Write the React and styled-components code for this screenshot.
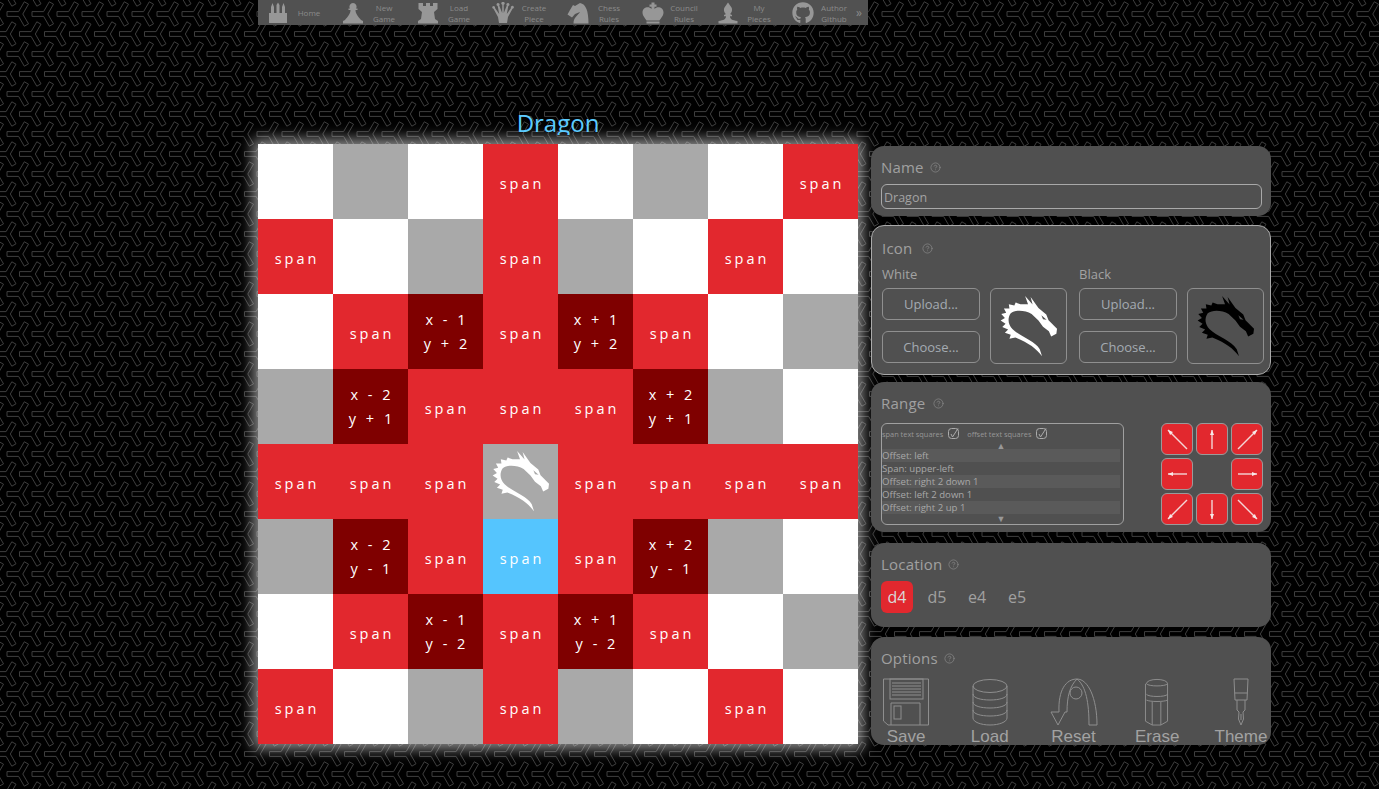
import React from 'react'
import styled, { createGlobalStyle } from 'styled-components'
import { CircleHelp } from 'lucide-react'
import { FaGithub } from 'react-icons/fa'

const yShape = (cx, cy) => {
  const pts = [[-13, -2.4], [-1.4, -2.4], [4.3, -12.2], [8.5, -9.8], [2.8, 0], [8.5, 9.8], [4.3, 12.2], [-1.4, 2.4], [-13, 2.4]]
  return `<polygon points="${pts.map(([x, y]) => `${x + cx},${y + cy}`).join(' ')}"/>`
}

const tile = `<svg xmlns="http://www.w3.org/2000/svg" width="25" height="40"><g fill="none" stroke="#3e3e3e" stroke-width="1">${[
  [20, 14], [-5, 14], [7.5, 34], [32.5, 34], [7.5, -6], [32.5, -6]
].map(([x, y]) => yShape(x, y)).join('')}</g></svg>`

const GlobalStyle = createGlobalStyle`
  html, body {
    margin: 0;
    height: 100%;
    overflow: hidden;
  }
  body {
    background-color: #000;
    background-image: url("data:image/svg+xml,${encodeURIComponent(tile)}");
    font-family: "Open Sans", "Liberation Sans", sans-serif;
    color: #a3a3a3;
  }
`

const Page = styled.div`
  width: 1379px;
  height: 789px;
  padding-left: 258px;
  box-sizing: border-box;
`

const Nav = styled.nav`
  display: flex;
  width: 610px;
  height: 25px;
  background: #515151;
`

const NavItem = styled.div`
  flex: 0 0 75px;
  display: flex;
  align-items: center;
  padding-left: 9px;
  box-sizing: border-box;
  color: #979797;
  svg { flex: 0 0 22px; }
`

const NavLabel = styled.span`
  width: 40px;
  text-align: center;
  font-size: 8px;
  line-height: 11px;
  color: #8b8b8b;
`

const NavLine = styled.span`
  display: block;
`

const More = styled.span`
  font-size: 12px;
  line-height: 25px;
  color: #8b8b8b;
  margin-left: -2px;
`

const Main = styled.div`
  display: flex;
  gap: 13px;
`

const BoardColumn = styled.div`
  width: 600px;
`

const Title = styled.h1`
  margin: 81px 0 9px;
  height: 29px;
  overflow: hidden;
  text-align: center;
  font-weight: 400;
  font-size: 24px;
  line-height: 34px;
  color: #5ccbff;
`

const Board = styled.div`
  display: grid;
  grid-template-columns: repeat(8, 75px);
  grid-auto-rows: 75px;
  box-shadow: 0 0 13px 5px rgba(255, 255, 255, 0.55);
`

const squareColors = {
  w: '#ffffff',
  g: '#a9a9a9',
  r: '#e2282e',
  d: '#7f0000',
  b: '#55c5fe'
}

const Square = styled.div`
  display: flex;
  flex-direction: column;
  align-items: center;
  justify-content: center;
  box-sizing: border-box;
  padding: ${p => (p.$kind === 'r' || p.$kind === 'b' ? 4 : 0)}px 0 0 3px;
  background: ${p => squareColors[p.$kind]};
  color: #fff;
  font-size: 14.5px;
  line-height: 24px;
  letter-spacing: 3px;
  white-space: pre;
  svg { margin-left: -3px; }
`

const Side = styled.div`
  width: 400px;
  padding-top: 121px;
  display: flex;
  flex-direction: column;
`

const Panel = styled.section`
  box-sizing: border-box;
  height: ${p => p.$height}px;
  margin-bottom: ${p => p.$after}px;
  padding: ${p => p.$top}px 10px 0;
  background: #505050;
  border-radius: 13px;
  border: ${p => (p.$outlined ? '1px solid #aaa' : 'none')};
`

const PanelTitle = styled.div`
  display: flex;
  align-items: center;
  gap: ${p => p.$gap}px;
  font-size: 15px;
  line-height: 20px;
  letter-spacing: 0.2px;
  color: #a0a0a0;
  svg { color: #8f8f8f; }
`

const NameInput = styled.input`
  display: block;
  box-sizing: border-box;
  width: 381px;
  height: 25px;
  margin-top: 7px;
  padding: 2px 2px 0;
  background: transparent;
  border: 1px solid #a9a9a9;
  border-radius: 6px;
  font: 12.5px "Open Sans", sans-serif;
  color: #a3a3a3;
`

const IconGroups = styled.div`
  display: flex;
  margin-top: 6px;
`

const IconGroup = styled.div`
  flex: 0 0 197px;
`

const GroupLabel = styled.div`
  font-size: 13px;
  line-height: 20px;
  margin-bottom: 4px;
`

const GroupRow = styled.div`
  display: flex;
  gap: 10px;
`

const ButtonStack = styled.div`
  display: flex;
  flex-direction: column;
  gap: 11px;
`

const OutlineButton = styled.button`
  width: 98px;
  height: 32px;
  padding: 0;
  background: transparent;
  border: 1px solid #8f8f8f;
  border-radius: 6px;
  font: 500 13px "Open Sans", sans-serif;
  color: #a4abb2;
`

const Preview = styled.div`
  box-sizing: border-box;
  width: 77px;
  height: 76px;
  display: flex;
  align-items: center;
  justify-content: center;
  border: 1px solid #8f8f8f;
  border-radius: 6px;
`

const RangeRow = styled.div`
  display: flex;
  justify-content: space-between;
  width: 382px;
  margin-top: 10px;
`

const ListBox = styled.div`
  box-sizing: border-box;
  width: 243px;
  height: 102px;
  padding: 0 3px 0 0;
  border: 1px solid #a0a0a0;
  border-radius: 6px;
`

const ListHead = styled.div`
  display: flex;
  align-items: center;
  height: 19px;
  font-size: 7.4px;
  color: #979797;
  white-space: nowrap;
`

const CheckLabel = styled.span`
  margin-right: ${p => p.$gap}px;
`

const CheckMark = styled.svg`
  width: 11px;
  height: 11px;
  margin-right: ${p => p.$gap}px;
  fill: none;
  stroke: #ababab;
  stroke-width: 1;
`

const Scroll = styled.div`
  height: ${p => p.$height}px;
  text-align: center;
  font-size: 9px;
  line-height: ${p => p.$height}px;
  color: #989898;
`

const ListRow = styled.div`
  height: 13px;
  line-height: 13px;
  font-size: 9.6px;
  white-space: nowrap;
  color: #a8a8a8;
  background: ${p => (p.$odd ? '#5a5a5a' : 'transparent')};
`

const ArrowPad = styled.div`
  display: grid;
  grid-template-columns: repeat(3, 32px);
  grid-auto-rows: 32px;
  gap: 3px;
`

const ArrowButton = styled.div`
  box-sizing: border-box;
  background: #e2282e;
  border: 1px solid #9a9a9a;
  border-radius: 6px;
  svg { display: block; }
`

const Locations = styled.div`
  display: flex;
  gap: 8px;
  margin-top: 7px;
`

const LocationButton = styled.div`
  width: 32px;
  height: 32px;
  line-height: 32px;
  text-align: center;
  border-radius: 6px;
  font-size: 16px;
  color: ${p => (p.$active ? '#d9d9d9' : '#a0a0a0')};
  background: ${p => (p.$active ? '#e2282e' : 'transparent')};
`

const OptionRow = styled.div`
  display: flex;
  gap: 13.75px;
  margin: 10px -10px 0;
`

const Option = styled.div`
  flex: 0 0 70px;
  display: flex;
  flex-direction: column;
  align-items: center;
  font-family: "Liberation Sans", Arial, sans-serif;
  font-size: 17px;
  line-height: 20px;
  color: #a2a2a2;
  svg {
    display: block;
    height: 48px;
    margin-bottom: 1px;
    fill: none;
    stroke: #8e8e8e;
    stroke-width: 1;
  }
`

const Dragon = ({ color, size = 58 }) => (
  <svg width={size} height={size * 1.07} viewBox="403 464 178 190">
    <path
      fill={color}
      fillRule="evenodd"
      d="M480 467 L503 493 L497 470 L521 504 L545 524 L552 541 L578 567 L576 583 L560 591 L553 575 L535 561 L521 542 L500 522 C480 510 450 508 436 520 C425 535 428 555 441 568 C462 590 510 604 525 630 L532 652 C515 628 490 610 450 594 L432 598 L436 586 L418 580 L428 570 L410 562 L420 552 L405 542 L418 534 L407 522 L422 518 L415 505 L432 505 L430 492 L447 496 L451 487 L466 492 L489 492 Z M530 526 L546 540 L535 538 Z"
    />
  </svg>
)

const Piece = ({ d }) => (
  <svg width="22" height="22" viewBox="0 0 22 22" fill="currentColor">
    <path d={d} />
  </svg>
)

const paths = {
  home: 'M2 21 V11 H4 V5 L5.5 1 L7 5 V11 H9.5 V3 L11 0.5 L12.5 3 V11 H15 V5 L16.5 1 L18 5 V11 H20 V21 Z',
  pawn: 'M11 1 A3.6 3.6 0 0 1 14 6.6 H15.5 V8.1 H13.5 C13.5 12 16.5 15 19 18 L21 19 V21.5 H1 V19 L3 18 C5.5 15 8.5 12 8.5 8.1 H6.5 V6.6 H8 A3.6 3.6 0 0 1 11 1 Z',
  rook: 'M1.5 1 H6 V4 H9 V1 H13 V4 H16 V1 H20.5 V7 L17 10 L18 17 L21 19 V21.5 H1 V19 L4 17 L5 10 L1.5 7 Z',
  queen: 'M0.5 4.5 A1.5 1.5 0 0 1 3 6 L7.2 12 L5.7 4 A1.5 1.5 0 1 1 7.2 3.5 L10.2 11 L10.3 2.8 A1.6 1.6 0 1 1 11.7 2.8 L11.8 11 L14.8 3.5 A1.5 1.5 0 1 1 16.3 4 L14.8 12 L19 6 A1.5 1.5 0 1 1 20.5 6.8 L16 15 L15 21 H7 L6 15 L1.5 6.8 A1.5 1.5 0 0 1 0.5 4.5 Z',
  knight: 'M6 3 L8 4 L13 1 C19 2 21.5 9 21.5 21.5 H6.5 C6.5 15 11 13.5 13 10 L8 12 L5 15.5 L0.5 12.5 L3 8 Z',
  king: 'M9.5 0.5 H12.5 V2.5 H14.5 V4.8 H12.5 V7 C15 4 21.5 5 21.5 10.5 C21.5 14 18.5 16.5 17.5 18.5 H4.5 C3.5 16.5 0.5 14 0.5 10.5 C0.5 5 7 4 9.5 7 V4.8 H7.5 V2.5 H9.5 Z M4.5 19.5 H17.5 V21.5 H4.5 Z',
  bishop: 'M11 0.5 L14.5 5.5 C16 8.5 14 11.5 13 12 L15 13 V14.2 H13 C13 17 15 18.2 20.5 19 V21.5 H1.5 V19 C7 18.2 9 17 9 14.2 H7 V13 L9 12 C8 11.5 6 8.5 7.5 5.5 Z'
}

const navItems = [
  [<Piece d={paths.home} key="i" />, 'Home'],
  [<Piece d={paths.pawn} key="i" />, 'New Game'],
  [<Piece d={paths.rook} key="i" />, 'Load Game'],
  [<Piece d={paths.queen} key="i" />, 'Create Piece'],
  [<Piece d={paths.knight} key="i" />, 'Chess Rules'],
  [<Piece d={paths.king} key="i" />, 'Council Rules'],
  [<Piece d={paths.bishop} key="i" />, 'My Pieces'],
  [<FaGithub size={22} key="i" />, 'Author Github']
]

// one letter per square, offsets in the map below
const layout = [
  'wgwrwgwr',
  'rwgrgwrw',
  'wrdrdrwg',
  'gdrrrdgw',
  'rrrGrrrr',
  'gdrbrdgw',
  'wrdrdrwg',
  'rwgrgwrw'
]

const offsets = {
  '2,2': ['x - 1', 'y + 2'],
  '2,4': ['x + 1', 'y + 2'],
  '3,1': ['x - 2', 'y + 1'],
  '3,5': ['x + 2', 'y + 1'],
  '5,1': ['x - 2', 'y - 1'],
  '5,5': ['x + 2', 'y - 1'],
  '6,2': ['x - 1', 'y - 2'],
  '6,4': ['x + 1', 'y - 2']
}

const rangeItems = ['Offset: left', 'Span: upper-left', 'Offset: right 2 down 1', 'Offset: left 2 down 1', 'Offset: right 2 up 1']

// tail and tip of each arrow in a 30px box, null is the empty middle cell
const arrows = [
  [[25, 25], [6, 6]],
  [[15, 25], [15, 6]],
  [[6, 25], [25, 6]],
  [[25, 15], [6, 15]],
  null,
  [[6, 15], [25, 15]],
  [[25, 6], [6, 25]],
  [[15, 6], [15, 25]],
  [[6, 6], [25, 25]]
]

const Arrow = ({ line }) => {
  const [from, tip] = line
  const dx = tip[0] - from[0]
  const dy = tip[1] - from[1]
  const len = Math.hypot(dx, dy)
  const ux = dx / len
  const uy = dy / len
  const head = `${tip[0]},${tip[1]} ${tip[0] - ux * 5 - uy * 2},${tip[1] - uy * 5 + ux * 2} ${tip[0] - ux * 5 + uy * 2},${tip[1] - uy * 5 - ux * 2}`
  return (
    <svg width="30" height="30" viewBox="0 0 30 30">
      <line x1={from[0]} y1={from[1]} x2={tip[0]} y2={tip[1]} stroke="#f4d6d6" strokeWidth="1.4" />
      <polygon points={head} fill="#f7e8e8" />
    </svg>
  )
}

const Check = ({ gap }) => (
  <CheckMark $gap={gap} viewBox="0 0 11 11">
    <rect x="0.5" y="0.5" width="10" height="10" rx="3" />
    <path d="M3 6 L4.5 9 L10 0.5" />
  </CheckMark>
)

const SaveIcon = () => (
  <svg viewBox="0 0 46 48" width="46">
    <path d="M0.5 1 H45.5 V47 H5 L0.5 43 Z" />
    <rect x="7" y="1" width="33" height="20" />
    <path d="M9 5 H38 M9 8 H38 M9 11 H38 M9 14 H38 M9 17 H38" />
    <path d="M8 47 V25 H37 V47" />
    <rect x="11" y="28" width="7" height="13" />
  </svg>
)

const LoadIcon = () => (
  <svg viewBox="0 0 36 48" width="36">
    <ellipse cx="18" cy="8" rx="17" ry="6.5" />
    <path d="M1 8 V40 C1 44 9 47 18 47 C27 47 35 44 35 40 V8" />
    <path d="M1 16 C1 20 9 22 18 22 C27 22 35 20 35 16" />
    <path d="M1 24 C1 28 9 30 18 30 C27 30 35 28 35 24" />
    <path d="M1 32 C1 36 9 38 18 38 C27 38 35 36 35 32" />
  </svg>
)

const ResetIcon = () => (
  <svg viewBox="0 0 48 48" width="48">
    <path d="M9 34 C8 12 16 1 27 1 C38 1 47 20 47 47 H39 C39 25 36 8 27 1" />
    <path d="M17 34 C17 18 20 8 27 1" />
    <circle cx="26" cy="15" r="6" />
    <path d="M9 34 H1 L8 47 L15 34 H17" />
  </svg>
)

const EraseIcon = () => (
  <svg viewBox="0 0 26 50" width="26">
    <path d="M2 6 C2 0 24 0 24 6 V45 L17 49 H8 L1 45 V6" />
    <path d="M2 6 C4 9 22 9 24 6" />
    <path d="M2 17 C4 20 22 20 24 17 M2 23 C6 25 20 25 24 23" />
    <path d="M8 25 V49 M17 25 V49" />
  </svg>
)

const ThemeIcon = () => (
  <svg viewBox="0 0 18 48" width="18">
    <path d="M2 1 H16 L15 22 H3 Z" />
    <path d="M2.6 15 H15.4" />
    <path d="M5 22 V32 L7 34 L6.5 41 L9 47 L11.5 41 L11 34 L13 32 V22" />
    <path d="M9 36 V42" />
  </svg>
)

const options = [
  [SaveIcon, 'Save'],
  [LoadIcon, 'Load'],
  [ResetIcon, 'Reset'],
  [EraseIcon, 'Erase'],
  [ThemeIcon, 'Theme']
]

const Help = ({ size = 11 }) => <CircleHelp size={size} strokeWidth={1.4} />

const IconColumn = ({ label, color }) => (
  <IconGroup>
    <GroupLabel>{label}</GroupLabel>
    <GroupRow>
      <ButtonStack>
        <OutlineButton>Upload...</OutlineButton>
        <OutlineButton>Choose...</OutlineButton>
      </ButtonStack>
      <Preview>
        <Dragon color={color} />
      </Preview>
    </GroupRow>
  </IconGroup>
)

const squareContent = (letter, r, c) => {
  if (letter === 'G') return <Dragon color="#fff" />
  if (letter === 'd') return offsets[`${r},${c}`].map(t => <span key={t}>{t}</span>)
  if (letter === 'r' || letter === 'b') return 'span'
  return null
}

export default function App() {
  return (
    <Page>
      <GlobalStyle />
      <Nav>
        {navItems.map(([icon, label]) => (
          <NavItem key={label}>
            {icon}
            <NavLabel>
              {label.split(' ').map(word => <NavLine key={word}>{word}</NavLine>)}
            </NavLabel>
          </NavItem>
        ))}
        <More>»</More>
      </Nav>
      <Main>
        <BoardColumn>
          <Title>Dragon</Title>
          <Board>
            {layout.map((row, r) =>
              row.split('').map((letter, c) => (
                <Square key={`${r}-${c}`} $kind={letter === 'G' ? 'g' : letter}>
                  {squareContent(letter, r, c)}
                </Square>
              ))
            )}
          </Board>
        </BoardColumn>
        <Side>
          <Panel $height={70} $after={9} $top={11}>
            <PanelTitle $gap={6}>Name <Help /></PanelTitle>
            <NameInput defaultValue="Dragon" />
          </Panel>
          <Panel $height={150} $after={7} $top={12} $outlined>
            <PanelTitle $gap={10}>Icon <Help /></PanelTitle>
            <IconGroups>
              <IconColumn label="White" color="#fff" />
              <IconColumn label="Black" color="#000" />
            </IconGroups>
          </Panel>
          <Panel $height={150} $after={11} $top={11}>
            <PanelTitle $gap={8}>Range <Help /></PanelTitle>
            <RangeRow>
              <ListBox>
                <ListHead>
                  <CheckLabel $gap={5}>span text squares</CheckLabel>
                  <Check gap={8} />
                  <CheckLabel $gap={5}>offset text squares</CheckLabel>
                  <Check gap={0} />
                </ListHead>
                <Scroll $height={6}>▲</Scroll>
                {rangeItems.map((item, i) => (
                  <ListRow key={item} $odd={i % 2 === 0}>{item}</ListRow>
                ))}
                <Scroll $height={10}>▼</Scroll>
              </ListBox>
              <ArrowPad>
                {arrows.map((line, i) =>
                  line ? <ArrowButton key={i}><Arrow line={line} /></ArrowButton> : <div key={i} />
                )}
              </ArrowPad>
            </RangeRow>
          </Panel>
          <Panel $height={84} $after={10} $top={11}>
            <PanelTitle $gap={6}>Location <Help /></PanelTitle>
            <Locations>
              <LocationButton $active>d4</LocationButton>
              <LocationButton>d5</LocationButton>
              <LocationButton>e4</LocationButton>
              <LocationButton>e5</LocationButton>
            </Locations>
          </Panel>
          <Panel $height={108} $after={0} $top={11}>
            <PanelTitle $gap={6}>Options <Help /></PanelTitle>
            <OptionRow>
              {options.map(([Icon, label]) => (
                <Option key={label}>
                  <Icon />
                  {label}
                </Option>
              ))}
            </OptionRow>
          </Panel>
        </Side>
      </Main>
    </Page>
  )
}
